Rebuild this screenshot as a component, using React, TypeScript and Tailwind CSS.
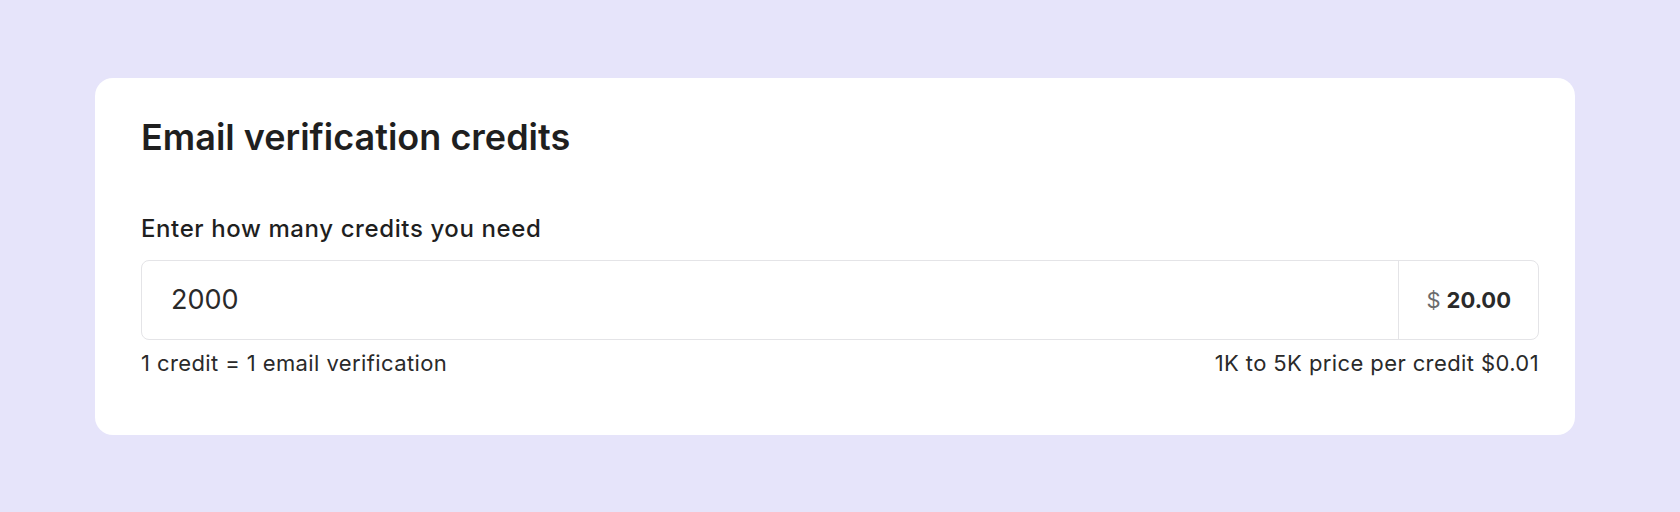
export default function App() {
  return (
    <div
      className="h-[512px] w-full bg-[#e6e4fa] pt-[78px]"
      style={{ fontFamily: "Inter, 'Noto Sans', sans-serif" }}
    >
      <div className="ml-[95px] w-[1480px] rounded-[18px] bg-white pt-[38px] pb-[58px] pl-[46px] pr-[36px]">
        <h1 className="text-[36px] font-semibold leading-[43px] text-[#1f1f1f]">
          Email verification credits
        </h1>

        <label className="mt-[56px] block text-[24px] font-medium leading-[28px] tracking-[0.6px] text-[#1f1f1f]">
          Enter how many credits you need
        </label>

        <div className="mt-[17px] flex h-[80px] rounded-[8px] border border-[#e4e4e7]">
          <input
            className="min-w-0 flex-1 bg-transparent pl-[29px] text-[27px] text-[#2a2a2a] outline-none"
            defaultValue="2000"
          />
          <div className="flex items-center gap-[6px] border-l border-[#e4e4e7] px-[27px] text-[22px]">
            <span className="text-[#6b6b6b]">$</span>
            <span className="font-bold text-[#2a2a2a]">20.00</span>
          </div>
        </div>

        <div className="mt-[9px] flex justify-between text-[22px] leading-[28px] tracking-[0.4px] text-[#2a2a2a]">
          <span>1 credit = 1 email verification</span>
          <span>1K to 5K price per credit $0.01</span>
        </div>
      </div>
    </div>
  );
}
